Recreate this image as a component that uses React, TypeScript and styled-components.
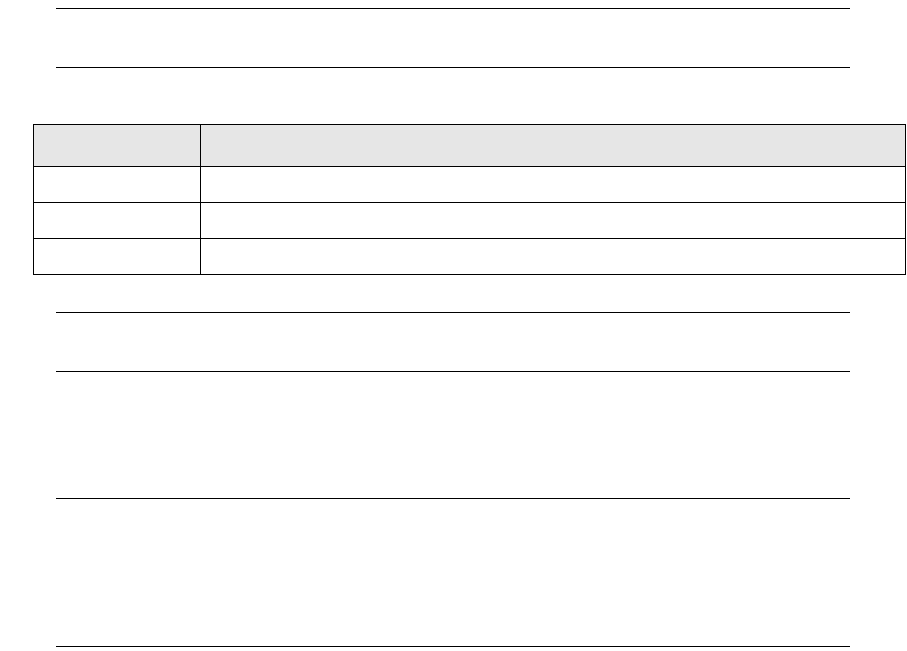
import React from "react";
import styled, { createGlobalStyle } from "styled-components";

const GlobalStyle = createGlobalStyle`
  html, body {
    margin: 0;
    padding: 0;
    background: #ffffff;
    font-family: "Liberation Sans", Arial, sans-serif;
    color: #000000;
  }
`;

const Page = styled.div`
  width: 907px;
  padding-top: 8px;
  display: flex;
  flex-direction: column;
`;

const Panel = styled.section`
  box-sizing: border-box;
  width: 794px;
  height: 60px;
  margin-left: 56px;
  border-top: 1px solid #000;
  border-bottom: 1px solid #000;
`;

const Grid = styled.table`
  margin: 56px 0 0 33px;
  width: 873px;
  table-layout: fixed;
  border-collapse: collapse;
`;

const HeadCell = styled.th<{ $w?: number }>`
  width: ${(p) => (p.$w ? `${p.$w}px` : "auto")};
  height: 41px;
  padding: 0;
  background: #e6e6e6;
  border: 1px solid #000;
`;

const Cell = styled.td`
  height: 35px;
  padding: 0;
  border: 1px solid #000;
`;

const Stack = styled.div`
  width: 794px;
  margin: 37px 0 0 56px;
  border-bottom: 1px solid #000;
`;

const Block = styled.section<{ $h: number }>`
  box-sizing: border-box;
  height: ${(p) => p.$h}px;
  border-top: 1px solid #000;
`;

const rows = [0, 1, 2];

export default function App() {
  return (
    <>
      <GlobalStyle />
      <Page>
        <Panel />
        <Grid>
          <thead>
            <tr>
              <HeadCell $w={166} />
              <HeadCell />
            </tr>
          </thead>
          <tbody>
            {rows.map((r) => (
              <tr key={r}>
                <Cell />
                <Cell />
              </tr>
            ))}
          </tbody>
        </Grid>
        <Stack>
          <Block $h={59} />
          <Block $h={127} />
          <Block $h={148} />
        </Stack>
      </Page>
    </>
  );
}
